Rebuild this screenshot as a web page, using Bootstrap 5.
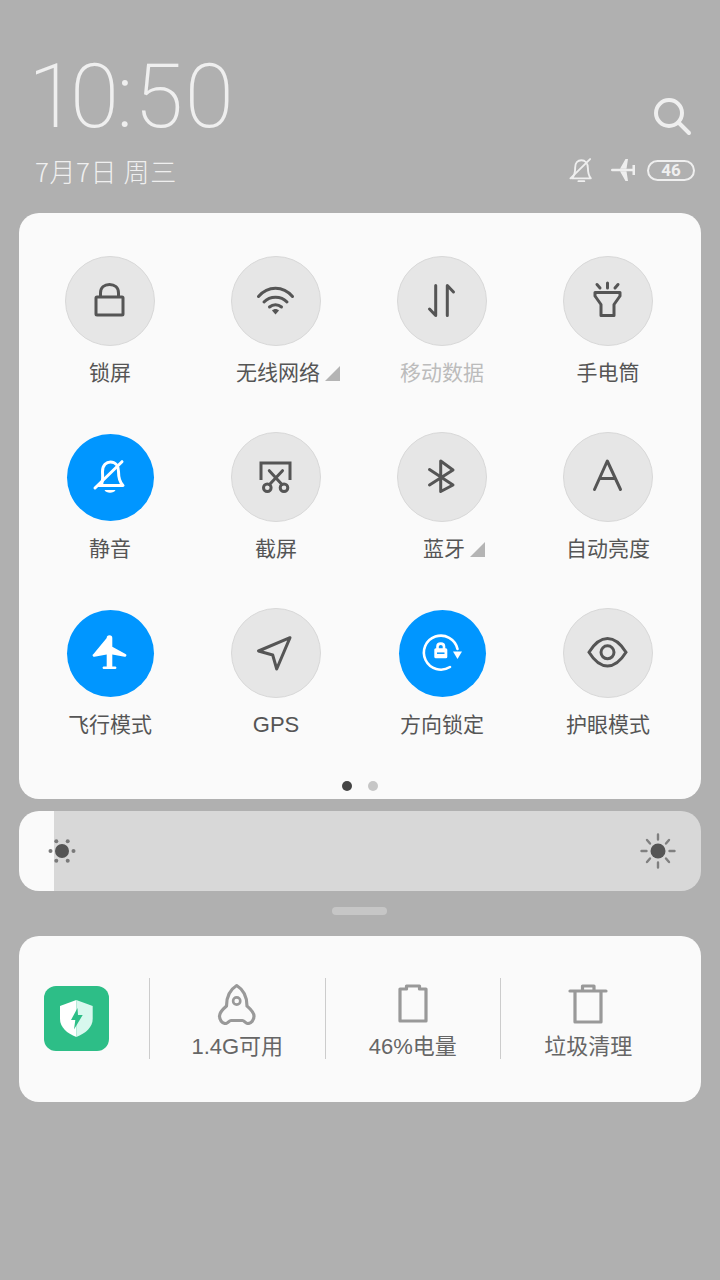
<!DOCTYPE html>
<html lang="zh-CN">
  <head>
    <meta charset="UTF-8" />
    <meta name="viewport" content="width=device-width, initial-scale=1.0" />
    <title>Control Center</title>
    <link
      href="https://cdn.jsdelivr.net/npm/bootstrap@5.3.3/dist/css/bootstrap.min.css"
      rel="stylesheet"
    />
    <style>
      body {
        background: #b0b0b0;
        font-family: "Liberation Sans", "Noto Sans CJK SC", sans-serif;
        width: 720px;
        height: 1280px;
        overflow: hidden;
      }
      svg {
        display: block;
        flex-shrink: 0;
      }
      .shade-head {
        height: 213px;
        padding: 0 25px 0 28px;
        color: #efefef;
      }
      .clock {
        font-family: Roboto, sans-serif;
        font-weight: 200;
        font-size: 89px;
        line-height: 90px;
        height: 90px;
        margin-top: 52px;
        letter-spacing: -2.6px;
      }
      .clock-one {
        letter-spacing: -7px;
      }
      .clock-gap {
        letter-spacing: 1px;
      }
      .clock-five {
        letter-spacing: 1.4px;
      }
      .clock-date {
        font-family: "Noto Sans CJK SC", sans-serif;
        font-size: 26px;
        font-weight: 300;
        line-height: 30px;
        margin-top: 14px;
        margin-left: 7px;
        letter-spacing: 0.6px;
      }
      .head-right {
        padding-top: 96px;
      }
      .find-icon {
        margin-right: 2px;
      }
      .batt-pill {
        width: 48px;
        height: 21px;
        margin-left: 11px;
        border: 2px solid #efefef;
        border-radius: 11px;
        font-family: Roboto, sans-serif;
        font-size: 17px;
        font-weight: 700;
        line-height: 17px;
      }
      .status-line {
        margin-top: 20px;
      }
      .mute-mini {
        margin-right: 18px;
      }
      .sheet {
        background: #fafafa;
        border-radius: 20px;
        margin: 0 19px;
      }
      .tile-sheet {
        height: 586px;
        padding: 43px 10px 0 8px;
      }
      .tile-row {
        row-gap: 44px;
      }
      .tile-circle {
        width: 90px;
        height: 90px;
        border-radius: 50%;
        background: #e6e6e6;
        border: 1px solid #d8d8d8;
      }
      .tile-circle.tile-on {
        width: 87px;
        height: 87px;
        margin: 1.5px;
        background: #0096ff;
        border: 0;
      }
      .tile-label {
        position: relative;
        margin-top: 12px;
        font-size: 21px;
        line-height: 30px;
        height: 30px;
        color: #555;
        white-space: nowrap;
      }
      .tile-label.tile-off {
        color: #bcbcbc;
      }
      .tile-label.has-more {
        margin-left: 4px;
      }
      .tile-label.tile-latin {
        font-size: 22px;
      }
      .more-mark {
        position: absolute;
        left: 100%;
        top: 8px;
        margin-left: 5px;
      }
      .page-dots {
        gap: 16px;
        margin-top: 41px;
        padding-left: 2px;
      }
      .page-dot {
        width: 10px;
        height: 10px;
        border-radius: 50%;
        background: #c6c6c6;
      }
      .page-dot.dot-on {
        background: #444;
      }
      .bright-bar {
        height: 80px;
        margin-top: 12px;
        padding: 0 25px 0 28px;
        background: linear-gradient(to right, #fafafa 35px, #d8d8d8 35px);
      }
      .grab-handle {
        width: 55px;
        height: 8px;
        border-radius: 4px;
        background: #c6c6c6;
        margin: 16px 0 21px 332px;
      }
      .tool-sheet {
        height: 166px;
        padding: 42px 25px 0;
      }
      .shield-tile {
        width: 65px;
        height: 65px;
        margin-top: 8px;
        margin-right: 40px;
        border-radius: 12px;
        background: #2dbe87;
      }
      .tool-cell {
        width: 175.5px;
        height: 81px;
        border-left: 1px solid #ccc;
        color: #666;
        font-size: 22px;
        line-height: 30px;
        white-space: nowrap;
      }
      .tool-cell svg {
        margin-top: 5px;
        margin-bottom: 7px;
      }
    </style>
  </head>
  <body>
    <!-- Header -->
    <div class="shade-head d-flex justify-content-between">
      <div>
        <div class="clock"><span class="clock-one">1</span>0<span class="clock-gap">:</span><span class="clock-five">5</span>0</div>
        <div class="clock-date">7月7日 周三</div>
      </div>
      <div class="head-right d-flex flex-column align-items-end">
        <svg class="find-icon" width="40" height="42" viewBox="0 0 40 42" fill="none" stroke="#efefef" stroke-width="4" stroke-linecap="round">
          <circle cx="16" cy="17" r="13" />
          <path d="M26 27 L36 37" />
        </svg>
        <div class="status-line d-flex align-items-center">
          <svg class="mute-mini" width="24" height="24" viewBox="29 28 31 33" fill="none" stroke="#efefef" stroke-width="2.6" stroke-linecap="round" stroke-linejoin="round">
            <path d="M32 56 H58 C55 52 54 47 54 42 C54 35 50 31 45 31 C40 31 36.500 35 36.500 41 C36.500 47 36 52 32 56Z" />
            <path d="M30 56 L57 29.500" />
            <path d="M41 60 H49" />
          </svg>
          <svg width="25" height="22" viewBox="0 0 25 22" fill="#efefef">
            <path d="M1.300 9.700 H24 V12.300 H1.300 A1.300 1.300 0 0 1 1.300 9.700Z" />
            <path d="M9 9.700 L14.500 0 H17 L15.500 9.700Z M9 12.300 L14.500 22 H17 L15.500 12.300Z M21.500 6 H24 V16 H21.500Z" />
          </svg>
          <div class="batt-pill d-flex align-items-center justify-content-center">46</div>
        </div>
      </div>
    </div>

    <!-- Quick toggles -->
    <div class="sheet tile-sheet">
      <div class="row row-cols-4 g-0 tile-row">
        <div class="col d-flex flex-column align-items-center">
          <div class="tile-circle d-flex align-items-center justify-content-center">
            <svg width="90" height="90" viewBox="0 0 90 90" fill="none" stroke="#555" stroke-width="3" stroke-linejoin="round">
              <rect x="31" y="41" width="27" height="18" rx="1" />
              <path d="M35.500 41 V37 C35.500 31.500 39.500 28.500 44.500 28.500 C49.500 28.500 53.500 31.500 53.500 37 V41" />
            </svg>
          </div>
          <div class="tile-label">锁屏</div>
        </div>
        <div class="col d-flex flex-column align-items-center">
          <div class="tile-circle d-flex align-items-center justify-content-center">
            <svg width="90" height="90" viewBox="0 0 90 90" fill="none" stroke="#555" stroke-width="3" stroke-linecap="round">
              <path d="M27.500 40.500 C37 29.500 52 29.500 61.500 40.500" />
              <path d="M33 46 C39 39.500 50 39.500 56 46" />
              <path d="M38.500 51 C42 48 47 48 50.500 51" />
              <path d="M41 54.500 C43 52.500 46 52.500 48 54.500 L44.500 58.500Z" fill="#555" stroke="none" />
            </svg>
          </div>
          <div class="tile-label has-more">无线网络<svg class="more-mark" width="15" height="15" viewBox="0 0 15 15"><path d="M0 15 L15 0 V15Z" fill="#b4b4b4" /></svg></div>
        </div>
        <div class="col d-flex flex-column align-items-center">
          <div class="tile-circle d-flex align-items-center justify-content-center">
            <svg width="90" height="90" viewBox="0 0 90 90" fill="none" stroke="#555" stroke-width="3" stroke-linecap="round" stroke-linejoin="round">
              <path d="M38.700 29.500 V59.500 L32.500 53" />
              <path d="M50.300 59.500 V29.500 L56.500 36" />
            </svg>
          </div>
          <div class="tile-label tile-off">移动数据</div>
        </div>
        <div class="col d-flex flex-column align-items-center">
          <div class="tile-circle d-flex align-items-center justify-content-center">
            <svg width="90" height="90" viewBox="0 0 90 90" fill="none" stroke="#555" stroke-width="3" stroke-linecap="round" stroke-linejoin="round">
              <path d="M32 36.500 H57 V40 L51 48.500 V59.500 H38 V48.500 L32 40Z" />
              <path d="M44.500 27 V32 M34 28.500 L37 32 M55 28.500 L52 32" />
            </svg>
          </div>
          <div class="tile-label">手电筒</div>
        </div>

        <div class="col d-flex flex-column align-items-center">
          <div class="tile-circle tile-on d-flex align-items-center justify-content-center">
            <svg width="90" height="90" viewBox="0 0 90 90" fill="none" stroke="#fff" stroke-width="3" stroke-linecap="round" stroke-linejoin="round">
              <path d="M36 53.500 C38.500 49 37.500 44 37.500 39.500 C37.500 33 41.500 30 45.500 30 C50 30 53.500 33.500 53.500 39.500 C53.500 45 54 49.500 58 53.500 H34" />
              <path d="M30 56 L57 29.700" />
              <path d="M39.500 58 H50.500 C49 61.500 41 61.500 39.500 58Z" fill="#fff" stroke="none" />
            </svg>
          </div>
          <div class="tile-label">静音</div>
        </div>
        <div class="col d-flex flex-column align-items-center">
          <div class="tile-circle d-flex align-items-center justify-content-center">
            <svg width="90" height="90" viewBox="0 0 90 90" fill="none" stroke="#555" stroke-width="3" stroke-linecap="round">
              <path d="M30 48 V31 H59 V48" stroke-linecap="butt" />
              <circle cx="36.300" cy="55.700" r="3.800" />
              <circle cx="53" cy="55.700" r="3.800" />
              <path d="M38.500 52.500 L51.500 38.700 M51 52.500 L38.300 38.700" />
            </svg>
          </div>
          <div class="tile-label">截屏</div>
        </div>
        <div class="col d-flex flex-column align-items-center">
          <div class="tile-circle d-flex align-items-center justify-content-center">
            <svg width="90" height="90" viewBox="0 0 90 90" fill="none" stroke="#555" stroke-width="3" stroke-linecap="round" stroke-linejoin="round">
              <path d="M32.500 37.500 L56 53 L43.700 59.500 V29 L56 38 L32.500 53" />
            </svg>
          </div>
          <div class="tile-label has-more">蓝牙<svg class="more-mark" width="15" height="15" viewBox="0 0 15 15"><path d="M0 15 L15 0 V15Z" fill="#b4b4b4" /></svg></div>
        </div>
        <div class="col d-flex flex-column align-items-center">
          <div class="tile-circle d-flex align-items-center justify-content-center">
            <svg width="90" height="90" viewBox="0 0 90 90" fill="none" stroke="#555" stroke-width="3" stroke-linecap="round" stroke-linejoin="round">
              <path d="M31.500 57.500 L44.300 29 L57.500 57.500 M36.500 46.500 H52.500" />
            </svg>
          </div>
          <div class="tile-label">自动亮度</div>
        </div>

        <div class="col d-flex flex-column align-items-center">
          <div class="tile-circle tile-on d-flex align-items-center justify-content-center">
            <svg width="90" height="90" viewBox="0 0 90 90" fill="#fff">
              <path d="M41.700 30 A2.800 2.800 0 0 1 47.300 30 V38.700 L60.500 46 A1.300 1.300 0 0 1 59.500 48.700 L47.300 46.500 V58.500 H50.500 A1.300 1.300 0 0 1 50.500 61 H38.500 A1.300 1.300 0 0 1 38.500 58.500 H41.700 V46.500 L29.500 48.700 A1.300 1.300 0 0 1 28.500 46Z" />
            </svg>
          </div>
          <div class="tile-label">飞行模式</div>
        </div>
        <div class="col d-flex flex-column align-items-center">
          <div class="tile-circle d-flex align-items-center justify-content-center">
            <svg width="90" height="90" viewBox="0 0 90 90" fill="none" stroke="#555" stroke-width="3" stroke-linejoin="round">
              <path d="M59 29.700 L27.500 43 L41.700 47 L45.700 61 Z" />
            </svg>
          </div>
          <div class="tile-label tile-latin">GPS</div>
        </div>
        <div class="col d-flex flex-column align-items-center">
          <div class="tile-circle tile-on d-flex align-items-center justify-content-center">
            <svg width="90" height="90" viewBox="0 0 90 90" fill="none" stroke="#fff" stroke-width="2.600" stroke-linecap="round">
              <path d="M60.500 41 A17 17 0 1 0 53 59" />
              <path d="M56 43.500 H65 L60.500 51Z" fill="#fff" stroke="none" />
              <path d="M40.500 41 V38.500 C40.500 34.700 47 34.700 47 38.500 V41" />
              <rect x="37.300" y="40.300" width="13" height="10" rx="1.500" fill="#fff" stroke="none" />
              <path d="M40 45.200 H47.500" stroke="#0096ff" stroke-width="1.500" stroke-linecap="butt" />
            </svg>
          </div>
          <div class="tile-label">方向锁定</div>
        </div>
        <div class="col d-flex flex-column align-items-center">
          <div class="tile-circle d-flex align-items-center justify-content-center">
            <svg width="90" height="90" viewBox="0 0 90 90" fill="none" stroke="#555" stroke-width="3">
              <path d="M26 44.300 C32 34.500 38 30.500 44.500 30.500 C51 30.500 57 34.500 63 44.300 C57 54 51 58 44.500 58 C38 58 32 54 26 44.300Z" />
              <circle cx="44.500" cy="44.300" r="6.500" />
            </svg>
          </div>
          <div class="tile-label">护眼模式</div>
        </div>
      </div>
      <div class="page-dots d-flex justify-content-center">
        <div class="page-dot dot-on"></div>
        <div class="page-dot"></div>
      </div>
    </div>

    <!-- Brightness -->
    <div class="sheet bright-bar d-flex align-items-center justify-content-between overflow-hidden">
      <svg width="30" height="30" viewBox="0 0 30 30" fill="#7a7a7a">
        <circle cx="15" cy="15" r="7" fill="#555" />
        <circle cx="3.500" cy="15" r="2" />
        <circle cx="26.500" cy="15" r="2" />
        <circle cx="9.300" cy="5.300" r="2" />
        <circle cx="20.700" cy="5.300" r="2" />
        <circle cx="9.300" cy="24.700" r="2" />
        <circle cx="20.700" cy="24.700" r="2" />
      </svg>
      <svg width="36" height="36" viewBox="0 0 36 36" fill="none" stroke="#808080" stroke-width="2.400" stroke-linecap="round">
        <circle cx="18" cy="18" r="7.500" fill="#555" stroke="none" />
        <path d="M18 1.500 V6.500 M18 29.500 V34.500 M1.500 18 H6.500 M29.500 18 H34.500 M7 7 L10 10.500 M29 7 L26 10.500 M7 29 L10 25.500 M29 29 L26 25.500" />
      </svg>
    </div>

    <div class="grab-handle"></div>

    <!-- Tools -->
    <div class="sheet tool-sheet d-flex align-items-start">
      <div class="shield-tile d-flex align-items-center justify-content-center">
        <svg width="65" height="65" viewBox="0 0 65 65">
          <path d="M32.300 14 L16 20 V33 C16 41 23 47.500 32.300 51Z" fill="#fff" />
          <path d="M32.300 14 L48.700 20 V33 C48.700 41 41.500 47.500 32.300 51Z" fill="#d8f8ee" />
          <path d="M33.500 22 L27 34 H31.300 L30 43.500 L38.700 29 H34Z" fill="#2dbe87" />
        </svg>
      </div>
      <div class="tool-cell d-flex flex-column align-items-center">
        <svg width="40" height="42" viewBox="0 0 40 42" fill="none" stroke="#999" stroke-width="3.200" stroke-linejoin="round">
          <path d="M19.700 2.500 C14 6 9.500 13 9.500 23 C6 26 2.500 29 2.500 33 C2.500 37 5 40.500 8.500 40.500 C11 40.500 12 37.500 14 37.500 H25.400 C27.400 37.500 28.400 40.500 30.900 40.500 C34.400 40.500 37 37 37 33 C37 29 33.400 26 30 23 C30 13 25.400 6 19.700 2.500Z" />
          <circle cx="19.700" cy="18" r="3.600" stroke-width="2.600" />
        </svg>
        <div>1.4G可用</div>
      </div>
      <div class="tool-cell d-flex flex-column align-items-center">
        <svg width="32" height="42" viewBox="0 0 32 42" fill="none" stroke="#999" stroke-width="3.200" stroke-linejoin="round">
          <path d="M3 6 H9.500 V3 H22.500 V6 H29 V38 H3Z" />
        </svg>
        <div>46%电量</div>
      </div>
      <div class="tool-cell d-flex flex-column align-items-center">
        <svg width="40" height="42" viewBox="0 0 40 42" fill="none" stroke="#999" stroke-width="3.200" stroke-linejoin="round">
          <path d="M2 8 H38" stroke-linecap="round" />
          <path d="M7 8 V39 H33 V8 M14.500 8 V3 H26 V8" />
        </svg>
        <div>垃圾清理</div>
      </div>
    </div>

    <script src="https://cdn.jsdelivr.net/npm/bootstrap@5.3.3/dist/js/bootstrap.bundle.min.js"></script>
  </body>
</html>
